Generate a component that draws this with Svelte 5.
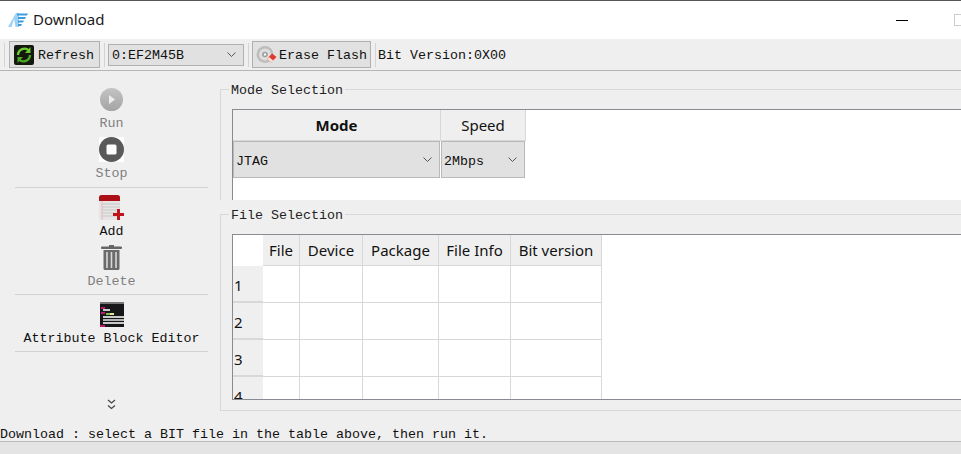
<script lang="ts">
  const colWidths = [30, 37, 63, 76, 72, 91];
  const fileCols = ["File", "Device", "Package", "File Info", "Bit version"];
  const rows = ["1", "2", "3", "4"];
</script>

<div class="window">
  <header class="titlebar">
    <svg class="logo" width="20" height="14" viewBox="0 0 20 14">
      <path d="M0 14 L8 0 L11 0 L11 14 Z" fill="#9ed2f3" />
      <path d="M6 6 L7.5 14 L3.5 14 Z" fill="#fff" />
      <path d="M9 0.5 H20 L19 2.5 H9 Z M10 4 H18 L17 6 H10 Z M10 7.5 H16 L15 9.5 H10 Z M10 11 H14 L13 13 H10 Z" fill="#3d9be0" />
    </svg>
    <span class="app-title">Download</span>
    <span class="min"></span>
    <span class="max"></span>
  </header>

  <div class="toolbar">
    <span class="sep first"></span>
    <button class="tool-btn refresh">
      <svg width="20" height="20" viewBox="0 0 20 20">
        <rect width="20" height="20" rx="2" fill="#14180f" />
        <path d="M4 10 A6.5 6.5 0 0 1 15 5.5" fill="none" stroke="#6ccb2e" stroke-width="2.4" />
        <path d="M16.5 2 V8 H11 Z" fill="#6ccb2e" />
        <path d="M16 10 A6.5 6.5 0 0 1 5 14.5" fill="none" stroke="#4aa821" stroke-width="2.4" />
        <path d="M3.5 18 V12 H9 Z" fill="#4aa821" />
      </svg>
      <span class="lbl">Refresh</span>
    </button>
    <span class="sep"></span>
    <div class="combo device">
      <span class="lbl">0:EF2M45B</span>
      <svg class="chev" width="9" height="5" viewBox="0 0 9 5"><path d="M0.5 0.5 L4.5 4.5 L8.5 0.5" fill="none" stroke="#555" /></svg>
    </div>
    <span class="sep"></span>
    <button class="tool-btn erase">
      <svg width="21" height="20" viewBox="0 0 21 20">
        <circle cx="9" cy="9.5" r="8.5" fill="#bdbdbd" />
        <circle cx="9" cy="9.5" r="6" fill="#dedede" />
        <circle cx="9" cy="9.5" r="2.8" fill="#9c9c9c" />
        <circle cx="9" cy="9.5" r="1.2" fill="#fff" />
        <path d="M11 14 L16 8.5 L20.5 12 L15 17.5 Z" fill="#e2392a" />
        <path d="M11 14 L13 12 L17.2 15.5 L15 17.5 Z" fill="#f6e0d8" />
      </svg>
      <span class="lbl">Erase Flash</span>
    </button>
    <span class="sep"></span>
    <span class="lbl bit-version">Bit Version:0X00</span>
  </div>

  <div class="main">
    <aside class="sidebar">
      <div class="tool disabled">
        <svg width="25" height="25" viewBox="0 0 25 25">
          <defs>
            <linearGradient id="runfill" x1="0" y1="0" x2="0" y2="1">
              <stop offset="0" stop-color="#c4c4c4" />
              <stop offset="1" stop-color="#a4a4a4" />
            </linearGradient>
          </defs>
          <circle cx="12.5" cy="12.5" r="11.5" fill="url(#runfill)" />
          <path d="M10 8 L16 12.5 L10 17 Z" fill="#ededed" />
        </svg>
        <span>Run</span>
      </div>
      <div class="tool disabled">
        <svg width="25" height="25" viewBox="0 0 25 25">
          <rect width="25" height="25" fill="#fff" />
          <circle cx="12.5" cy="12.5" r="12.5" fill="#5a5a5a" />
          <rect x="7.5" y="7.5" width="10" height="10" rx="1.5" fill="#fff" />
        </svg>
        <span>Stop</span>
      </div>
      <hr />
      <div class="tool">
        <svg width="25" height="25" viewBox="0 0 25 25">
          <rect x="0" y="0" width="21" height="25" rx="2.5" fill="#e6e4e4" />
          <path d="M0 6 V2.5 A2.5 2.5 0 0 1 2.5 0 H18.5 A2.5 2.5 0 0 1 21 2.5 V6 Z" fill="#ab1016" />
          <path d="M3 9 H21 M3 12 H21 M3 15 H21 M3 18 H21 M3 21 H21" stroke="#c9c9c9" />
          <path d="M3 6 V25" stroke="#eab9b9" />
          <path d="M14 19.5 H25 M19.5 14 V25" stroke="#c0141c" stroke-width="3" />
        </svg>
        <span>Add</span>
      </div>
      <div class="tool disabled short">
        <svg width="21" height="25" viewBox="0 0 21 25">
          <rect x="0" y="1.5" width="21" height="2.5" rx="1" fill="#666" />
          <rect x="8" y="0" width="5" height="2" fill="#666" />
          <path d="M2.5 5 H18.5 V23.5 A1.5 1.5 0 0 1 17 25 H4 A1.5 1.5 0 0 1 2.5 23.5 Z" fill="#6a6a6a" />
          <path d="M6 7 V23 M10.5 7 V23 M15 7 V23" stroke="#d8d8d8" stroke-width="1.6" />
        </svg>
        <span>Delete</span>
      </div>
      <hr />
      <div class="tool short">
        <svg width="24" height="25" viewBox="0 0 24 25">
          <rect width="24" height="25" fill="#17171a" />
          <rect y="0" width="24" height="2" fill="#777" />
          <rect x="1" y="5" width="4" height="2" fill="#c0186f" />
          <rect x="3" y="7" width="7" height="2" fill="#c8c8c8" />
          <rect x="1" y="10" width="4" height="2" fill="#c0186f" />
          <rect x="6" y="11" width="4" height="2" fill="#7cc04a" />
          <rect x="10" y="11" width="4" height="2" fill="#e3e39a" />
          <rect x="3" y="14" width="21" height="2" fill="#c9c9c9" />
          <rect x="3" y="17" width="21" height="2" fill="#b4b4b4" />
          <rect x="3" y="20" width="21" height="2" fill="#c9c9c9" />
          <rect x="0" y="23" width="5" height="2" fill="#c0186f" />
        </svg>
        <span>Attribute Block Editor</span>
      </div>
      <hr />
      <svg class="more" width="9" height="11" viewBox="0 0 9 11">
        <path d="M1 1 L4.5 4 L8 1 M1 6.5 L4.5 9.5 L8 6.5" fill="none" stroke="#444" stroke-width="1.2" />
      </svg>
    </aside>

    <div class="content">
      <fieldset class="group mode">
        <legend>Mode Selection</legend>
        <div class="mode-table">
          <div class="hcell bold">Mode</div>
          <div class="hcell">Speed</div>
          <div class="ccell"><span class="lbl">JTAG</span><svg class="chev" width="9" height="5" viewBox="0 0 9 5"><path d="M0.5 0.5 L4.5 4.5 L8.5 0.5" fill="none" stroke="#555" /></svg></div>
          <div class="ccell"><span class="lbl">2Mbps</span><svg class="chev" width="9" height="5" viewBox="0 0 9 5"><path d="M0.5 0.5 L4.5 4.5 L8.5 0.5" fill="none" stroke="#555" /></svg></div>
        </div>
      </fieldset>

      <fieldset class="group file">
        <legend>File Selection</legend>
        <div class="file-table">
          <div class="file-grid" style="grid-template-columns: {colWidths.map((w) => w + 'px').join(' ')};">
            <div class="corner"></div>
            {#each fileCols as col}
              <div class="hcell">{col}</div>
            {/each}
            {#each rows as row}
              <div class="rowhead">{row}</div>
              {#each fileCols as _col}
                <div class="cell"></div>
              {/each}
            {/each}
          </div>
        </div>
      </fieldset>
    </div>
  </div>

  <div class="status-text">Download : select a BIT file in the table above, then run it.</div>
  <div class="statusbar"></div>
</div>

<style>
  :global(body) {
    margin: 0;
    background: #efefef;
  }

  .window {
    width: 961px;
    height: 454px;
    overflow: hidden;
    display: flex;
    flex-direction: column;
    background: #efefef;
    font-family: "Liberation Mono", "DejaVu Sans Mono", monospace;
    font-size: 13.33px;
    color: #111;
  }

  .titlebar {
    box-sizing: border-box;
    height: 39px;
    flex: none;
    display: flex;
    align-items: center;
    background: #fff;
    border-top: 1px solid #555;
    padding: 0 0 0 8px;
  }

  .logo {
    flex: none;
  }

  .app-title {
    margin: -2px 0 0 5px;
    font-family: "Noto Sans", sans-serif;
    font-size: 15px;
    color: #1a1a1a;
    flex: 1;
  }

  .min {
    width: 12px;
    height: 1px;
    background: #000;
    margin-right: 46px;
  }

  .max {
    box-sizing: border-box;
    width: 7px;
    height: 12px;
    border: 1px solid #ccc;
    border-right: none;
  }

  .toolbar {
    box-sizing: border-box;
    height: 32px;
    flex: none;
    display: flex;
    align-items: center;
    border-bottom: 1px solid #b5b5b5;
    padding-left: 4px;
  }

  .lbl {
    display: block;
    padding-top: 2px;
    white-space: nowrap;
  }

  .sep {
    width: 1px;
    height: 24px;
    background: #d4d4d4;
    margin: 0 3px 0 4px;
    flex: none;
  }

  .sep.first {
    margin: 0 4px 0 0;
  }

  .tool-btn {
    box-sizing: border-box;
    height: 27px;
    flex: none;
    display: flex;
    align-items: center;
    padding: 0 3px;
    border: 1px solid #b0b0b0;
    background: #e1e1e1;
    font: inherit;
    color: inherit;
  }

  .refresh {
    width: 91px;
    padding-left: 4px;
    gap: 4px;
  }

  .erase {
    width: 119px;
    gap: 2px;
  }

  .combo {
    box-sizing: border-box;
    flex: none;
    display: flex;
    align-items: center;
    justify-content: space-between;
    border: 1px solid #b0b0b0;
    background: #e1e1e1;
  }

  .device {
    width: 136px;
    height: 22px;
    padding: 0 7px 0 3px;
  }

  .bit-version {
    margin-left: -1px;
  }

  .main {
    flex: 1;
    min-height: 0;
    display: flex;
  }

  .sidebar {
    box-sizing: border-box;
    width: 220px;
    flex: none;
    display: flex;
    flex-direction: column;
    align-items: center;
    padding: 16px 12px 0 15px;
  }

  .sidebar hr {
    flex: none;
    align-self: stretch;
    border: none;
    height: 1px;
    background: #d2d2d2;
    margin: 0 0 7px;
  }

  .tool {
    flex: none;
    display: flex;
    flex-direction: column;
    align-items: center;
    height: 50px;
    gap: 4px;
  }

  .tool.short {
    height: 49px;
  }

  .tool span {
    line-height: 16px;
  }

  .tool svg {
    flex: none;
  }

  .tool.disabled {
    color: #808080;
  }

  .more {
    flex: none;
    margin-top: 40px;
  }

  .content {
    flex: 1;
    min-width: 0;
    display: flex;
    flex-direction: column;
  }

  .group {
    margin: 0;
    min-width: 0;
    box-sizing: border-box;
    border: 1px solid #d8d8d8;
    border-right: none;
    padding: 0 0 0 11px;
  }

  .group legend {
    padding: 0 2px;
    margin-left: -3px;
    height: 16px;
    line-height: 20px;
    color: #222;
  }

  .mode {
    margin-top: 10px;
    height: 119px;
    border-bottom: none;
  }

  .mode-table {
    box-sizing: border-box;
    height: 91px;
    margin-top: 12px;
    border-top: 1px solid #8a8a92;
    border-left: 1px solid #8a8a92;
    background: #fff;
    display: grid;
    grid-template-columns: 208px 85px;
    grid-template-rows: 31px 37px;
    justify-content: start;
    align-content: start;
  }

  .hcell {
    box-sizing: border-box;
    background: #efefef;
    border-right: 1px solid #d8d8d8;
    border-bottom: 1px solid #d8d8d8;
    display: flex;
    align-items: center;
    justify-content: center;
    font-family: "Noto Sans", sans-serif;
    font-size: 15px;
    color: #111;
  }

  .bold {
    font-weight: 700;
  }

  .ccell {
    box-sizing: border-box;
    display: flex;
    align-items: center;
    justify-content: space-between;
    background: #e1e1e1;
    border: 1px solid #b8b8b8;
    margin-right: 1px;
    padding: 0 7px 0 2px;
  }

  .ccell .lbl {
    padding-top: 4px;
  }

  .file {
    margin-top: 6px;
    height: 205px;
  }

  .file-table {
    box-sizing: border-box;
    height: 166px;
    margin-top: 12px;
    border: 1px solid #8a8a92;
    border-right: none;
    background: #fff;
    overflow: hidden;
  }

  .file-grid {
    display: grid;
    grid-template-rows: 31px 37px 37px 37px 37px;
    justify-content: start;
  }

  .corner {
    background: #fff;
  }

  .rowhead {
    box-sizing: border-box;
    background: #efefef;
    border-bottom: 2px solid #d8d8d8;
    padding: 9px 0 0 1px;
    font-family: "Noto Sans", sans-serif;
    font-size: 15px;
    color: #111;
  }

  .cell {
    box-sizing: border-box;
    border-right: 1px solid #d8d8d8;
    border-bottom: 1px solid #d8d8d8;
  }

  .status-text {
    height: 16px;
    line-height: 20px;
    flex: none;
  }

  .statusbar {
    box-sizing: border-box;
    height: 13px;
    flex: none;
    background: #e4e4e4;
    border-top: 1px solid #bbb;
  }
</style>
